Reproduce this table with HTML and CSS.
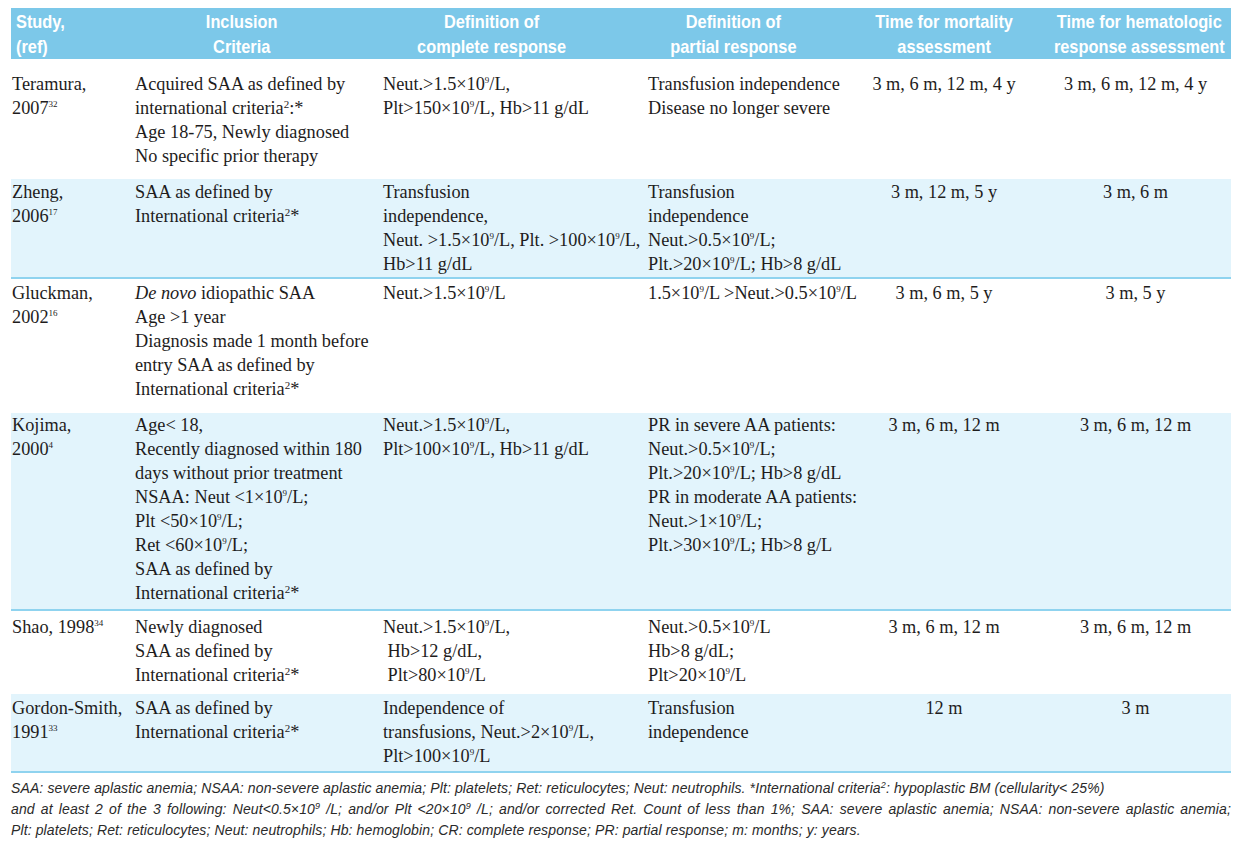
FILE: index.html
```html
<!DOCTYPE html>
<html lang="en">
<head>
<meta charset="utf-8">
<title>Aplastic anemia studies – response definitions</title>
<link rel="stylesheet" href="styles.css">
</head>
<body>
<div class="page">
  <table class="studies">
    <colgroup>
      <col class="c1"><col class="c2"><col class="c3"><col class="c4"><col class="c5"><col class="c6">
    </colgroup>
    <thead>
      <tr>
        <th class="h1"><span class="hd">Study,<br>(ref)</span></th>
        <th class="h2"><span class="hd">Inclusion<br>Criteria</span></th>
        <th class="h3"><span class="hd">Definition of<br>complete response</span></th>
        <th class="h4"><span class="hd">Definition of<br>partial response</span></th>
        <th class="h5"><span class="hd">Time for mortality<br>assessment</span></th>
        <th class="h6"><span class="hd">Time for hematologic<br>response assessment</span></th>
      </tr>
    </thead>
    <tbody>
      <tr class="r1">
        <td class="d1">Teramura,<br>2007<sup class="ref">32</sup></td>
        <td class="d2">Acquired SAA as defined by<br>international criteria<sup class="crit">2</sup>:*<br>Age 18-75, Newly diagnosed<br>No specific prior therapy</td>
        <td class="d3">Neut.&gt;1.5×10<sup class="exp">9</sup>/L,<br>Plt&gt;150×10<sup class="exp">9</sup>/L, Hb&gt;11 g/dL</td>
        <td class="d4">Transfusion independence<br>Disease no longer severe</td>
        <td class="d5">3 m, 6 m, 12 m, 4 y</td>
        <td class="d6">3 m, 6 m, 12 m, 4 y</td>
      </tr>
      <tr class="r2 shade">
        <td class="d1">Zheng,<br>2006<sup class="ref">17</sup></td>
        <td class="d2">SAA as defined by<br>International criteria<sup class="crit">2</sup>*</td>
        <td class="d3">Transfusion<br>independence,<br>Neut. &gt;1.5×10<sup class="exp">9</sup>/L, Plt. &gt;100×10<sup class="exp">9</sup>/L,<br>Hb&gt;11 g/dL</td>
        <td class="d4">Transfusion<br>independence<br>Neut.&gt;0.5×10<sup class="exp">9</sup>/L;<br>Plt.&gt;20×10<sup class="exp">9</sup>/L; Hb&gt;8 g/dL</td>
        <td class="d5">3 m, 12 m, 5 y</td>
        <td class="d6">3 m, 6 m</td>
      </tr>
      <tr class="r3">
        <td class="d1">Gluckman,<br>2002<sup class="ref">16</sup></td>
        <td class="d2"><i>De novo</i> idiopathic SAA<br>Age &gt;1 year<br>Diagnosis made 1 month before<br>entry SAA as defined by<br>International criteria<sup class="crit">2</sup>*</td>
        <td class="d3">Neut.&gt;1.5×10<sup class="exp">9</sup>/L</td>
        <td class="d4">1.5×10<sup class="exp">9</sup>/L &gt;Neut.&gt;0.5×10<sup class="exp">9</sup>/L</td>
        <td class="d5">3 m, 6 m, 5 y</td>
        <td class="d6">3 m, 5 y</td>
      </tr>
      <tr class="r4 shade">
        <td class="d1">Kojima,<br>2000<sup class="ref">4</sup></td>
        <td class="d2">Age&lt; 18,<br>Recently diagnosed within 180<br>days without prior treatment<br>NSAA: Neut &lt;1×10<sup class="exp">9</sup>/L;<br>Plt &lt;50×10<sup class="exp">9</sup>/L;<br>Ret &lt;60×10<sup class="exp">9</sup>/L;<br>SAA as defined by<br>International criteria<sup class="crit">2</sup>*</td>
        <td class="d3">Neut.&gt;1.5×10<sup class="exp">9</sup>/L,<br>Plt&gt;100×10<sup class="exp">9</sup>/L, Hb&gt;11 g/dL</td>
        <td class="d4">PR in severe AA patients:<br>Neut.&gt;0.5×10<sup class="exp">9</sup>/L;<br>Plt.&gt;20×10<sup class="exp">9</sup>/L; Hb&gt;8 g/dL<br>PR in moderate AA patients:<br>Neut.&gt;1×10<sup class="exp">9</sup>/L;<br>Plt.&gt;30×10<sup class="exp">9</sup>/L; Hb&gt;8 g/L</td>
        <td class="d5">3 m, 6 m, 12 m</td>
        <td class="d6">3 m, 6 m, 12 m</td>
      </tr>
      <tr class="r5">
        <td class="d1">Shao, 1998<sup class="ref">34</sup></td>
        <td class="d2">Newly diagnosed<br>SAA as defined by<br>International criteria<sup class="crit">2</sup>*</td>
        <td class="d3">Neut.&gt;1.5×10<sup class="exp">9</sup>/L,<br>&nbsp;Hb&gt;12 g/dL,<br>&nbsp;Plt&gt;80×10<sup class="exp">9</sup>/L</td>
        <td class="d4">Neut.&gt;0.5×10<sup class="exp">9</sup>/L<br>Hb&gt;8 g/dL;<br>Plt&gt;20×10<sup class="exp">9</sup>/L</td>
        <td class="d5">3 m, 6 m, 12 m</td>
        <td class="d6">3 m, 6 m, 12 m</td>
      </tr>
      <tr class="r6 shade">
        <td class="d1">Gordon-Smith,<br>1991<sup class="ref">33</sup></td>
        <td class="d2">SAA as defined by<br>International criteria<sup class="crit">2</sup>*</td>
        <td class="d3">Independence of<br>transfusions, Neut.&gt;2×10<sup class="exp">9</sup>/L,<br>Plt&gt;100×10<sup class="exp">9</sup>/L</td>
        <td class="d4">Transfusion<br>independence</td>
        <td class="d5">12 m</td>
        <td class="d6">3 m</td>
      </tr>
    </tbody>
  </table>
  <div class="notes">
    <p class="note">SAA: severe aplastic anemia; NSAA: non-severe aplastic anemia; Plt: platelets; Ret: reticulocytes; Neut: neutrophils. *International criteria<sup class="nsup">2</sup>: hypoplastic BM (cellularity&lt; 25%)</p>
    <p class="note justify">and at least 2 of the 3 following: Neut&lt;0.5×10<sup class="nsup">9</sup> /L; and/or Plt &lt;20×10<sup class="nsup">9</sup> /L; and/or corrected Ret. Count of less than 1%; SAA: severe aplastic anemia; NSAA: non-severe aplastic anemia;</p>
    <p class="note">Plt: platelets; Ret: reticulocytes; Neut: neutrophils; Hb: hemoglobin; CR: complete response; PR: partial response; m: months; y: years.</p>
  </div>
</div>
</body>
</html>
```

FILE: styles.css
```css
html, body {
  margin: 0;
  padding: 0;
  background: #ffffff;
}

.page {
  padding: 8px 11px 0 11px;
  width: 1220px;
}

.studies {
  border-collapse: collapse;
  table-layout: fixed;
  width: 1220px;
}

.c1 { width: 120px; }
.c2 { width: 248px; }
.c3 { width: 265px; }
.c4 { width: 178px; }
.c5 { width: 218px; }
.c6 { width: 191px; }

/* header */
.studies th {
  background: #7cc8e9;
  color: #ffffff;
  font-family: "Liberation Sans", Arial, sans-serif;
  font-weight: bold;
  font-size: 19px;
  line-height: 25px;
  padding: 1px 0 0 0;
  height: 50px;
  box-sizing: border-box;
  vertical-align: top;
  text-align: center;
  white-space: nowrap;
}
.hd {
  display: inline-block;
  transform: scaleX(0.86);
  transform-origin: 50% 50%;
}
.studies th.h1 { text-align: left; padding-left: 5px; }
.studies th.h1 .hd { transform-origin: 0 50%; }
.studies th.h2 { padding-right: 26px; }
.studies th.h3 { padding-right: 39px; }
.studies th.h5 { padding-left: 26px; }
.studies th.h6 { padding-left: 0; }

/* body */
.studies td {
  font-family: "Liberation Serif", "Times New Roman", serif;
  font-size: 18.3px;
  line-height: 24px;
  color: #1e1c1c;
  vertical-align: top;
  white-space: nowrap;
  text-align: left;
  padding: 0;
}
.studies td.d1 { padding-left: 1px; }
.studies td.d2 { padding-left: 4px; }
.studies td.d3 { padding-left: 4px; }
.studies td.d4 { padding-left: 4px; }
.studies td.d5 { text-align: center; padding-left: 26px; }
.studies td.d6 { text-align: center; }

.r1 td { padding-top: 13px; padding-bottom: 11px; }
.r2 td { padding-top: 1px; padding-bottom: 1px; }
.r3 td { padding-top: 2px; padding-bottom: 12px; }
.r4 td { padding-top: 0; padding-bottom: 4px; }
.r5 td { padding-top: 4px; padding-bottom: 7px; }
.r6 td { padding-top: 2px; padding-bottom: 3px; }

.shade td {
  background: #e2f4fc;
  border-bottom: 2px solid #8fd3ef;
}

sup {
  line-height: 0;
  vertical-align: baseline;
  position: relative;
}
sup.ref { font-size: 9px; top: -7px; }
sup.exp { font-size: 9px; top: -7px; }
sup.crit { font-size: 11px; top: -6px; }

/* notes */
.notes {
  margin-top: 5px;
  font-family: "Liberation Sans", Arial, sans-serif;
  font-style: italic;
  font-size: 14px;
  letter-spacing: 0.12px;
  line-height: 21px;
  color: #2a2a2a;
}
.note {
  margin: 0;
  white-space: nowrap;
}
.note.justify {
  white-space: normal;
  text-align: justify;
  text-align-last: justify;
}
sup.nsup { font-size: 9px; top: -5px; }
```
